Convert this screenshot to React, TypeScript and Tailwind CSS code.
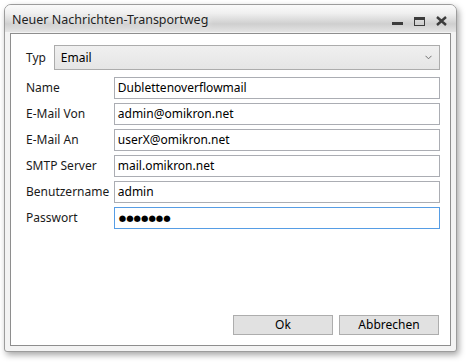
import React from "react";

const rows = [
  { label: "Name", value: "Dublettenoverflowmail" },
  { label: "E-Mail Von", value: "admin@omikron.net" },
  { label: "E-Mail An", value: "userX@omikron.net" },
  { label: "SMTP Server", value: "mail.omikron.net" },
  { label: "Benutzername", value: "admin" },
];

function Field({ label, value, focused }: { label: string; value: React.ReactNode; focused?: boolean }) {
  return (
    <div className="flex items-center h-[22px]">
      <div className="w-[88px] text-[12px] text-[#1a1a1a]">{label}</div>
      <div
        className={`flex items-center w-[327px] h-[22px] px-[3px] bg-white border text-[12px] text-black ${
          focused ? "border-[#569de5]" : "border-[#abadb3]"
        }`}
      >
        {value}
      </div>
    </div>
  );
}

export default function App() {
  return (
    <div className="w-[468px] h-[364px] bg-white pt-[4px] pl-[4px] font-['Noto_Sans',sans-serif]">
      <div className="flex flex-col w-[453px] h-[348px] rounded-t-[7px] rounded-b-[3px] border border-[#9c9c9c] bg-[#f3f3f3] shadow-[2px_3px_6px_rgba(0,0,0,0.35)]">
        {/* title bar */}
        <div className="flex items-center h-[27px] pl-[7px] pr-[9px] rounded-t-[6px] bg-[linear-gradient(to_bottom,#fafafa_0%,#f0f0f0_30%,#cfcfcf_70%,#e4e4e4_100%)]">
          <span className="text-[12.5px] text-[#1f1f1f] mt-[4px] [text-shadow:0_0_6px_rgba(255,255,255,0.9)]">
            Neuer Nachrichten-Transportweg
          </span>
          <div className="flex items-center gap-[11px] ml-auto mt-[5px]">
            <div className="w-[11px] h-[3px] bg-[#3c3c3c] mt-[5px]" />
            <div className="w-[11px] h-[9px] border border-[#3c3c3c] border-t-[3px]" />
            <svg width="11" height="10" viewBox="0 0 11 10">
              <path d="M1 1 L10 9 M10 1 L1 9" stroke="#3c3c3c" strokeWidth="2.4" />
            </svg>
          </div>
        </div>
        {/* client area */}
        <div className="flex-1 mx-[5px] mb-[5px] mt-[1px] border border-[#8e8e8e] bg-white flex flex-col pl-[15px] pr-[10px] pt-[11px] pb-[10px]">
          <div className="flex items-center h-[25px]">
            <div className="w-[28px] text-[12px] text-[#1a1a1a]">Typ</div>
            <div className="flex items-center justify-between w-[389px] h-[25px] pl-[6px] pr-[7px] border border-[#acacac] bg-[linear-gradient(to_bottom,#f0f0f0,#e5e5e5)] text-[12px] text-black">
              <span>Email</span>
              <svg width="7" height="5" viewBox="0 0 7 5">
                <path d="M0.5 0.8 L3.5 3.8 L6.5 0.8" fill="none" stroke="#707070" strokeWidth="1" />
              </svg>
            </div>
          </div>
          <div className="flex flex-col gap-[4px] mt-[7px]">
            {rows.map((r) => (
              <Field key={r.label} label={r.label} value={r.value} />
            ))}
            <Field
              label="Passwort"
              focused
              value={<span className="text-[8.5px] pl-[1px] font-['DejaVu_Sans',sans-serif]">●●●●●●●</span>}
            />
          </div>
          <div className="flex justify-end gap-[6px] mt-auto pr-[1px]">
            <div className="w-[100px] h-[20px] flex items-center justify-center border border-[#adadad] bg-[#e1e1e1] text-[12px] text-black">
              Ok
            </div>
            <div className="w-[100px] h-[20px] flex items-center justify-center border border-[#adadad] bg-[#e1e1e1] text-[12px] text-black">
              Abbrechen
            </div>
          </div>
        </div>
      </div>
    </div>
  );
}
